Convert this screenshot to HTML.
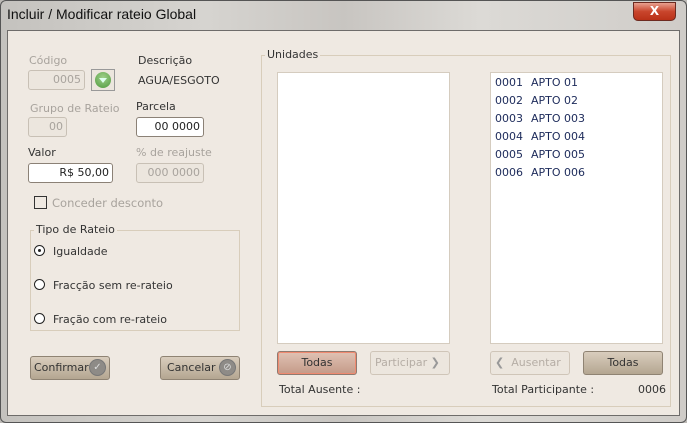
<!DOCTYPE html>
<html><head><style>
*{box-sizing:border-box;margin:0;padding:0}
body{width:687px;height:423px;overflow:hidden;font-family:"DejaVu Sans","Liberation Sans",sans-serif;font-size:11px;color:#333;background:#bdbab6;position:relative}
.frame{position:absolute;left:0;top:0;width:687px;height:423px;background:linear-gradient(90deg,#c4c2be 0%,#d6d4d0 30%,#c8c5c1 50%,#dcdad6 70%,#cfccc8 100%);border:1px solid #555;border-radius:6px}
.title{position:absolute;left:7px;top:6px;font-family:"Liberation Sans",sans-serif;font-size:14px;color:#111}
.close{position:absolute;left:633px;top:2px;width:43px;height:19px;border-radius:0 0 5px 5px;background:linear-gradient(#e8a08f,#c9452c 50%,#b93118);border:1px solid #6d2a20;color:#fff;font-weight:bold;font-size:12px;text-align:center;line-height:16px}
.client{position:absolute;left:7px;top:30px;width:673px;height:386px;background:#efe9e2;border:1px solid #6e6c6a}
.a{position:absolute}
.lbl{position:absolute;font-size:11px;color:#333}
.dis{color:#a8a39d}
.inp{position:absolute;height:20px;border:1px solid #c8c0b5;border-radius:3px;background:#ece6de;text-align:right;padding-right:3px;line-height:18px;color:#a8a39d;font-size:11px}
.inp.on{background:#fff;border-color:#8b8176;color:#222}
.grp{position:absolute;border:1px solid #d8cdbb}
.gt{position:absolute;background:#efe9e2;padding:0 2px;font-size:11px;color:#333}
.radio{position:absolute;width:11px;height:11px;border:1px solid #222;border-radius:50%;background:#fff}
.btn{position:absolute;height:24px;border-radius:3px;border:1px solid #8f8373;background:linear-gradient(#d9cdbd,#b4a691);font-size:11px;color:#333;line-height:22px}
.list{position:absolute;background:#fff;border:1px solid #d5ccbf}
.row{position:absolute;left:4px;font-size:11px;color:#1c2a5a}
.row span{position:absolute;left:36px;white-space:nowrap}
.ico{position:absolute;width:17px;height:17px;border-radius:50%;background:#8e8b87;border:1px solid #777}
</style></head><body>
<div class="frame"></div>
<div class="title">Incluir / Modificar rateio Global</div>
<div class="close">X</div>
<div class="client"></div>

<div class="lbl dis" style="left:29px;top:54px">Código</div>
<div class="inp" style="left:28px;top:70px;width:57px">0005</div>
<div class="a" style="left:91px;top:69px;width:24px;height:22px;border:1px solid #999;background:#ece6de"><div style="margin:2px 3px;width:16px;height:16px;border-radius:50%;background:radial-gradient(circle at 50% 35%,#9fd08a,#4f9a3e);position:relative"><div style="position:absolute;left:4px;top:6px;width:0;height:0;border-left:4px solid transparent;border-right:4px solid transparent;border-top:5px solid #dfe"></div></div></div>
<div class="lbl" style="left:138px;top:54px">Descrição</div>
<div class="lbl" style="left:138px;top:74px">AGUA/ESGOTO</div>

<div class="lbl dis" style="left:30px;top:102px">Grupo de Rateio</div>
<div class="inp" style="left:28px;top:117px;width:39px">00</div>
<div class="lbl" style="left:136px;top:100px">Parcela</div>
<div class="inp on" style="left:136px;top:117px;width:68px">00 0000</div>

<div class="lbl" style="left:28px;top:146px">Valor</div>
<div class="inp on" style="left:28px;top:163px;width:85px">R$ 50,00</div>
<div class="lbl dis" style="left:136px;top:146px">% de reajuste</div>
<div class="inp" style="left:136px;top:163px;width:68px">000 0000</div>

<div class="a" style="left:34px;top:196px;width:13px;height:13px;border:1px solid #333;background:#efe9e2"></div>
<div class="lbl dis" style="left:52px;top:196px;font-size:11.5px">Conceder desconto</div>

<div class="grp" style="left:30px;top:230px;width:210px;height:101px"></div>
<div class="gt" style="left:34px;top:223px">Tipo de Rateio</div>
<div class="radio" style="left:34px;top:245px"><div style="margin:3px;width:3px;height:3px;border-radius:50%;background:#222"></div></div>
<div class="lbl" style="left:53px;top:245px">Igualdade</div>
<div class="radio" style="left:34px;top:279px"></div>
<div class="lbl" style="left:53px;top:279px">Fracção sem re-rateio</div>
<div class="radio" style="left:34px;top:313px"></div>
<div class="lbl" style="left:53px;top:313px">Fração com re-rateio</div>

<div class="btn" style="left:30px;top:356px;width:80px;padding-left:3px">Confirmar<div class="ico" style="left:58px;top:2px;color:#ddd;font-size:10px;line-height:15px;text-align:center">✓</div></div>
<div class="btn" style="left:160px;top:356px;width:80px;padding-left:6px">Cancelar<div class="ico" style="left:58px;top:2px;color:#ddd;font-size:10px;line-height:15px;text-align:center">⊘</div></div>

<div class="grp" style="left:261px;top:55px;width:410px;height:352px"></div>
<div class="gt" style="left:265px;top:48px">Unidades</div>
<div class="list" style="left:277px;top:72px;width:173px;height:272px"></div>
<div class="list" style="left:490px;top:72px;width:173px;height:272px">
<div class="row" style="top:3px">0001<span>APTO 01</span></div>
<div class="row" style="top:21px">0002<span>APTO 02</span></div>
<div class="row" style="top:39px">0003<span>APTO 003</span></div>
<div class="row" style="top:57px">0004<span>APTO 004</span></div>
<div class="row" style="top:75px">0005<span>APTO 005</span></div>
<div class="row" style="top:93px">0006<span>APTO 006</span></div>
</div>
<div class="btn" style="left:277px;top:351px;width:80px;text-align:center;background:linear-gradient(#e0c2b4,#c49a88);border-color:#8f7a70;box-shadow:inset 0 0 0 1px #f08a70">Todas</div>
<div class="btn" style="left:370px;top:351px;width:80px;padding-left:4px;background:#ece6de;border-color:#cfc5b8;color:#b5ada5">Participar <span style="color:#999;font-weight:bold">❯</span></div>
<div class="btn" style="left:490px;top:351px;width:80px;padding-left:4px;background:#ece6de;border-color:#cfc5b8;color:#b5ada5"><span style="color:#999;font-weight:bold">❮</span>&nbsp;&nbsp;Ausentar</div>
<div class="btn" style="left:583px;top:351px;width:80px;text-align:center">Todas</div>
<div class="lbl" style="left:279px;top:383px">Total Ausente :</div>
<div class="lbl" style="left:492px;top:383px">Total Participante :</div>
<div class="lbl" style="left:638px;top:383px">0006</div>
</body></html>
